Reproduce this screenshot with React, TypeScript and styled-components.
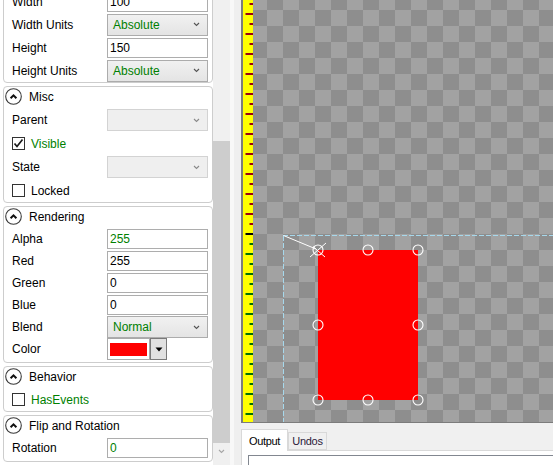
import React from 'react';
import styled, { createGlobalStyle } from 'styled-components';

type Row =
  | { kind: 'text'; label: string; value: string; accent?: boolean }
  | { kind: 'select'; label: string; value?: string; disabled?: boolean }
  | { kind: 'check'; label: string; checked?: boolean; accent?: boolean }
  | { kind: 'color'; label: string; color: string };

interface IGroup {
  title: string;
  rowH: number;
  pad: number;
  rows: Row[];
}

const groups: IGroup[] = [
  {
    title: 'Size',
    rowH: 23,
    pad: 0,
    rows: [
      { kind: 'text', label: 'Width', value: '100' },
      { kind: 'select', label: 'Width Units', value: 'Absolute' },
      { kind: 'text', label: 'Height', value: '150' },
      { kind: 'select', label: 'Height Units', value: 'Absolute' },
    ],
  },
  {
    title: 'Misc',
    rowH: 24,
    pad: 0,
    rows: [
      { kind: 'select', label: 'Parent', disabled: true },
      { kind: 'check', label: 'Visible', checked: true, accent: true },
      { kind: 'select', label: 'State', disabled: true },
      { kind: 'check', label: 'Locked' },
    ],
  },
  {
    title: 'Rendering',
    rowH: 22,
    pad: 2,
    rows: [
      { kind: 'text', label: 'Alpha', value: '255', accent: true },
      { kind: 'text', label: 'Red', value: '255' },
      { kind: 'text', label: 'Green', value: '0' },
      { kind: 'text', label: 'Blue', value: '0' },
      { kind: 'select', label: 'Blend', value: 'Normal' },
      { kind: 'color', label: 'Color', color: '#ff0000' },
    ],
  },
  {
    title: 'Behavior',
    rowH: 22,
    pad: 0,
    rows: [{ kind: 'check', label: 'HasEvents', accent: true }],
  },
  {
    title: 'Flip and Rotation',
    rowH: 22,
    pad: 2,
    rows: [{ kind: 'text', label: 'Rotation', value: '0', accent: true }],
  },
];

const CHECK_ROW_H = 23;

// ruler origin (y of the black tick / dashed guide)
const ORIGIN = 234;

const shape = { x: 65, y: 250, w: 100, h: 150 };

const GlobalStyle = createGlobalStyle`
  html, body {
    margin: 0;
    padding: 0;
    background: #f0f0f0;
  }
  body {
    font-family: "Liberation Sans", Arial, sans-serif;
    font-size: 12px;
    color: #000;
  }
`;

const CollapseIcon = () => (
  <svg width="17" height="17" viewBox="0 0 17 17">
    <circle cx="8.5" cy="8.5" r="7.8" fill="#fff" stroke="#3a3a3a" strokeWidth="1.1" />
    <path d="M5.6 10.2 L8.5 7.3 L11.4 10.2" fill="none" stroke="#111" strokeWidth="2" />
  </svg>
);

const Chevron = ({ color }: { color: string }) => (
  <svg width="7" height="5" viewBox="0 0 7 5">
    <path d="M1 1 L3.5 3.5 L6 1" fill="none" stroke={color} strokeWidth="1.1" />
  </svg>
);

const CheckMark = () => (
  <svg width="11" height="11" viewBox="0 0 11 11">
    <path d="M1.5 5.5 L4 8.5 L9.5 1.5" fill="none" stroke="#1a1a1a" strokeWidth="1.7" />
  </svg>
);

const PropertyRow = ({ row, h }: { row: Row; h: number }) => {
  if (row.kind === 'check') {
    return (
      <SCheckRow $h={CHECK_ROW_H}>
        <SCheckBox>{row.checked && <CheckMark />}</SCheckBox>
        <SValueText $accent={row.accent}>{row.label}</SValueText>
      </SCheckRow>
    );
  }
  return (
    <SRow $h={h}>
      <SLabel>{row.label}</SLabel>
      {row.kind === 'text' && <STextBox $accent={row.accent}>{row.value}</STextBox>}
      {row.kind === 'select' && (
        <SSelect $disabled={row.disabled}>
          <SValueText $accent>{row.value}</SValueText>
          <Chevron color={row.disabled ? '#8a8a8a' : '#555'} />
        </SSelect>
      )}
      {row.kind === 'color' && (
        <SColorPicker>
          <SSwatchBox>
            <SSwatch $color={row.color} />
          </SSwatchBox>
          <SSwatchButton>
            <svg width="8" height="5" viewBox="0 0 8 5">
              <path d="M0.5 0.5 H7.5 L4 4.5 Z" fill="#000" />
            </svg>
          </SSwatchButton>
        </SColorPicker>
      )}
    </SRow>
  );
};

const Ruler = () => {
  const ticks: number[] = [];
  for (let y = 4; y < 422; y += 10) ticks.push(y);
  return (
    <SRuler>
      <svg width="10" height="422">
        {ticks.map((y) => {
          const long = (y - ORIGIN) % 20 === 0;
          const color = y < ORIGIN ? '#9a0010' : y === ORIGIN ? '#000' : '#007000';
          return <rect key={y} x={long ? 2.5 : 6.5} y={y - 1} width={long ? 7.5 : 3.5} height={2} fill={color} />;
        })}
      </svg>
    </SRuler>
  );
};

const Overlay = () => {
  const { x, y, w, h } = shape;
  const handles = [
    [x, y],
    [x + w / 2, y],
    [x + w, y],
    [x, y + h / 2],
    [x + w, y + h / 2],
    [x, y + h],
    [x + w / 2, y + h],
    [x + w, y + h],
  ];
  return (
    <SOverlay width="300" height="422">
      <line x1="30" y1="235.5" x2="300" y2="235.5" stroke="#a6d8ec" strokeDasharray="5 2" />
      <line x1="30.5" y1="236" x2="30.5" y2="422" stroke="#a6d8ec" strokeDasharray="5 2" />
      <line x1="30.5" y1="235.5" x2="63" y2="249" stroke="#fff" />
      <line x1="57" y1="257" x2="73" y2="243" stroke="#fff" />
      <line x1="60" y1="246.5" x2="72" y2="257" stroke="#fff" />
      {handles.map(([cx, cy]) => (
        <circle key={`${cx}-${cy}`} cx={cx} cy={cy} r="5" fill="none" stroke="#fff" strokeWidth="1.1" />
      ))}
    </SOverlay>
  );
};

export default function App() {
  return (
    <>
      <GlobalStyle />
      <SRoot>
        <SLeftPane>
          <SPropertyList>
            <SScrolled>
              {groups.map((g) => (
                <SGroup key={g.title} $pad={g.pad}>
                  <SGroupHeader>
                    <CollapseIcon />
                    <span>{g.title}</span>
                  </SGroupHeader>
                  {g.rows.map((r) => (
                    <PropertyRow key={r.label} row={r} h={g.rowH} />
                  ))}
                </SGroup>
              ))}
            </SScrolled>
          </SPropertyList>
          <SScrollbar>
            <STrack>
              <SThumb $top={141} $height={302} />
            </STrack>
            <SScrollArrow>
              <Chevron color="#a6a6a6" />
            </SScrollArrow>
          </SScrollbar>
        </SLeftPane>
        <SSplitter />
        <SRightPane>
          <SCanvasFrame>
            <Ruler />
            <SCanvas>
              <SShape style={{ left: shape.x, top: shape.y, width: shape.w, height: shape.h }} />
              <Overlay />
            </SCanvas>
          </SCanvasFrame>
          <STabArea>
            <STabStrip>
              <STab $active $w={47}>Output</STab>
              <STab $w={39}>Undos</STab>
            </STabStrip>
            <STabPanel>
              <SOutputBox />
            </STabPanel>
          </STabArea>
        </SRightPane>
      </SRoot>
    </>
  );
}

const SRoot = styled.div`
  display: flex;
  width: 553px;
  height: 465px;
  overflow: hidden;
  background: #f0f0f0;
`;

const SLeftPane = styled.div`
  display: flex;
  width: 230px;
  flex-shrink: 0;
  background: #fff;
`;

const SPropertyList = styled.div`
  width: 213px;
  box-sizing: border-box;
  padding-left: 3px;
  overflow: hidden;
`;

const SScrolled = styled.div`
  display: flex;
  flex-direction: column;
  gap: 3px;
  margin-top: -32px;
`;

const SGroup = styled.div<{ $pad: number }>`
  width: 210px;
  box-sizing: border-box;
  border: 1px solid #cdcdcd;
  border-radius: 4px;
  padding-bottom: ${(p) => p.$pad}px;
`;

const SGroupHeader = styled.div`
  display: flex;
  align-items: flex-start;
  gap: 7px;
  height: 21px;
  padding: 1px 0 0 1px;
  box-sizing: border-box;

  span {
    line-height: 18px;
  }
`;

const SRow = styled.div<{ $h: number }>`
  display: grid;
  grid-template-columns: 103px 101px;
  align-items: center;
  height: ${(p) => p.$h}px;
`;

const SLabel = styled.span`
  padding-left: 8px;
  white-space: nowrap;
`;

const SValueText = styled.span<{ $accent?: boolean }>`
  color: ${(p) => (p.$accent ? '#008000' : '#000')};
  white-space: nowrap;
`;

const STextBox = styled.div<{ $accent?: boolean }>`
  display: flex;
  align-items: center;
  height: 20px;
  box-sizing: border-box;
  padding: 0 2px;
  border: 1px solid #adadad;
  background: #fff;
  color: ${(p) => (p.$accent ? '#008000' : '#000')};
`;

const SSelect = styled.div<{ $disabled?: boolean }>`
  display: flex;
  align-items: center;
  justify-content: space-between;
  height: 22px;
  box-sizing: border-box;
  padding: 0 7px 0 5px;
  border: 1px solid ${(p) => (p.$disabled ? '#d3d3d3' : '#acacac')};
  background: ${(p) => (p.$disabled ? '#efefef' : 'linear-gradient(#f1f1f1, #e4e4e4)')};
`;

const SCheckRow = styled.div<{ $h: number }>`
  display: flex;
  align-items: center;
  gap: 6px;
  height: ${(p) => p.$h}px;
  padding-left: 8px;
`;

const SCheckBox = styled.div`
  display: flex;
  align-items: center;
  justify-content: center;
  width: 13px;
  height: 13px;
  box-sizing: border-box;
  border: 1px solid #333;
  background: #fff;
`;

const SColorPicker = styled.div`
  display: flex;
  height: 22px;
`;

const SSwatchBox = styled.div`
  display: flex;
  align-items: center;
  justify-content: center;
  width: 43px;
  box-sizing: border-box;
  border: 1px solid #a9a9a9;
  background: #fff;
`;

const SSwatch = styled.div<{ $color: string }>`
  width: 37px;
  height: 13px;
  background: ${(p) => p.$color};
`;

const SSwatchButton = styled.div`
  display: flex;
  align-items: center;
  justify-content: center;
  width: 17px;
  box-sizing: border-box;
  border: 1px solid #7a7a7a;
  background: #e1e1e1;
`;

const SScrollbar = styled.div`
  display: flex;
  flex-direction: column;
  width: 17px;
  background: #f0f0f0;
`;

const STrack = styled.div`
  flex: 1;
`;

const SThumb = styled.div<{ $top: number; $height: number }>`
  margin-top: ${(p) => p.$top}px;
  height: ${(p) => p.$height}px;
  background: #cdcdcd;
`;

const SScrollArrow = styled.div`
  display: flex;
  align-items: center;
  justify-content: center;
  height: 17px;
  margin-bottom: 5px;
`;

const SSplitter = styled.div`
  width: 11px;
  flex-shrink: 0;
  box-sizing: border-box;
  border-left: 4px solid #f8f8f8;
  background: #efefef;
`;

const SRightPane = styled.div`
  display: flex;
  flex-direction: column;
  flex: 1;
  min-width: 0;
`;

const SCanvasFrame = styled.div`
  display: flex;
  height: 423px;
  box-sizing: border-box;
  border-style: solid;
  border-color: #7c7c7c;
  border-width: 0 0 1px 2px;
`;

const SRuler = styled.div`
  width: 10px;
  flex-shrink: 0;
  background: #ffff00;

  svg {
    display: block;
  }
`;

const SCanvas = styled.div`
  position: relative;
  flex: 1;
  overflow: hidden;
  background: repeating-conic-gradient(#a2a2a2 0% 25%, #8e8e8e 0% 50%) -2px 10px / 32px 32px;
`;

const SShape = styled.div`
  position: absolute;
  background: #ff0000;
`;

const SOverlay = styled.svg`
  position: absolute;
  left: 0;
  top: 0;
`;

const STabArea = styled.div`
  display: flex;
  flex-direction: column;
  flex: 1;
  padding-top: 6px;
  background: #f0f0f0;
`;

const STabStrip = styled.div`
  display: flex;
  align-items: flex-end;
  height: 21px;
  position: relative;
  z-index: 1;
`;

const STab = styled.div<{ $active?: boolean; $w: number }>`
  display: flex;
  align-items: center;
  justify-content: center;
  width: ${(p) => p.$w}px;
  height: ${(p) => (p.$active ? 22 : 18)}px;
  margin-bottom: ${(p) => (p.$active ? -1 : 0)}px;
  box-sizing: border-box;
  border: 1px solid #d9d9d9;
  border-bottom: ${(p) => (p.$active ? 'none' : '1px solid #d9d9d9')};
  background: ${(p) => (p.$active ? '#fff' : '#f0f0f0')};
  font-size: 11px;
  letter-spacing: -0.3px;
  color: ${(p) => (p.$active ? '#000' : '#2a1a3a')};
`;

const STabPanel = styled.div`
  flex: 1;
  box-sizing: border-box;
  padding: 4px 0 0 6px;
  border-top: 1px solid #d9d9d9;
  border-left: 1px solid #d9d9d9;
  background: #fff;
  overflow: hidden;
`;

const SOutputBox = styled.div`
  height: 30px;
  box-sizing: border-box;
  border: 1px solid #828790;
  border-right: none;
  background: #fff;
`;
